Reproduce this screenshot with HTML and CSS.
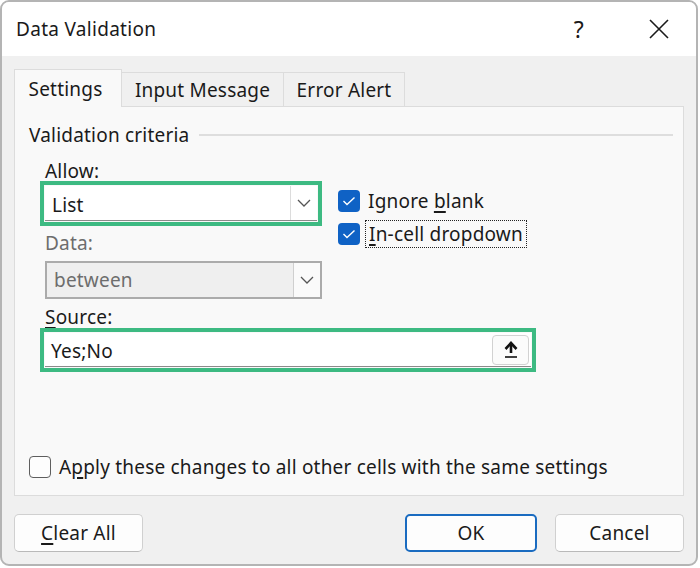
FILE: index.html
```html
<!DOCTYPE html>
<html>
<head>
<meta charset="utf-8">
<link rel="stylesheet" href="styles.css">
</head>
<body>
<div class="window">
  <div class="titlebar">
    <span class="title">Data Validation</span>
    <span class="help">?</span>
    <svg class="close" width="22" height="22" viewBox="0 0 22 22"><path d="M2 2 L20 20 M20 2 L2 20" stroke="#1a1a1a" stroke-width="1.6" fill="none"/></svg>
  </div>
  <div class="body">
    <div class="tabs">
      <div class="tab active">Settings</div>
      <div class="tab t2">Input Message</div>
      <div class="tab t3">Error Alert</div>
    </div>
    <div class="panel">
      <div class="group-title"><span>Validation criteria</span><span class="rule"></span></div>
      <div class="criteria">
        <div class="left">
          <div class="label"><u>A</u>llow:</div>
          <div class="highlight">
            <div class="select">
              <span class="value">List</span>
              <span class="drop"><svg width="14" height="8" viewBox="0 0 14 8"><path d="M1 1 L7 7 L13 1" stroke="#555" stroke-width="1.3" fill="none"/></svg></span>
            </div>
          </div>
          <div class="label disabled">Data:</div>
          <div class="select dis">
            <span class="value">between</span>
            <span class="drop"><svg width="14" height="8" viewBox="0 0 14 8"><path d="M1 1 L7 7 L13 1" stroke="#555" stroke-width="1.3" fill="none"/></svg></span>
          </div>
          <div class="label"><u>S</u>ource:</div>
          <div class="highlight wide">
            <div class="input">
              <span class="value">Yes;No</span>
              <span class="upbtn"><svg width="16" height="18" viewBox="0 0 16 18"><path d="M8 2 L8 12" stroke="#111" stroke-width="2.6" fill="none"/><path d="M2.5 8 L8 2 L13.5 8" stroke="#111" stroke-width="2.6" fill="none"/><path d="M2 16 L14 16" stroke="#111" stroke-width="1.6"/></svg></span>
            </div>
          </div>
        </div>
        <div class="right">
          <div class="check-row">
            <span class="cb on"><svg width="14" height="10" viewBox="0 0 14 10"><path d="M1.5 5 L5 8.5 L12.5 1.5" stroke="#fff" stroke-width="1.4" fill="none"/></svg></span>
            <span class="cb-label">Ignore <u>b</u>lank</span>
          </div>
          <div class="check-row">
            <span class="cb on"><svg width="14" height="10" viewBox="0 0 14 10"><path d="M1.5 5 L5 8.5 L12.5 1.5" stroke="#fff" stroke-width="1.4" fill="none"/></svg></span>
            <span class="cb-label focus"><u>I</u>n-cell dropdown</span>
          </div>
        </div>
      </div>
      <div class="apply-row">
        <span class="cb off"></span>
        <span class="cb-label">A<u>p</u>ply these changes to all other cells with the same settings</span>
      </div>
    </div>
    <div class="buttons">
      <div class="btn"><u>C</u>lear All</div>
      <div class="spacer"></div>
      <div class="btn default">OK</div>
      <div class="btn">Cancel</div>
    </div>
  </div>
</div>
</body>
</html>
```

FILE: styles.css
```css
* { box-sizing: border-box; }
html, body { margin: 0; padding: 0; background: #ffffff; }
body {
  width: 700px;
  height: 568px;
  font-family: "Noto Sans", "Open Sans", sans-serif;
  color: #1a1a1a;
  letter-spacing: 0.2px;
}
.window {
  width: 698px;
  height: 566px;
  border: 2px solid #b4b4b4;
  border-radius: 9px;
  overflow: hidden;
  display: flex;
  flex-direction: column;
  background: #f0f0f0;
}
.titlebar {
  height: 54px;
  background: #ffffff;
  display: flex;
  align-items: center;
  padding-left: 14px;
  font-size: 19px;
}
.title { flex: 1; letter-spacing: 0.3px; }
.help { font-size: 23px; margin-right: 64px; }
.close { margin-right: 26px; }
.body {
  flex: 1;
  display: flex;
  flex-direction: column;
  padding: 13px 12px 0 12px;
}
.tabs {
  display: flex;
  align-items: flex-end;
  height: 37px;
  font-size: 19px;
}
.tab {
  height: 34px;
  border: 1px solid #dcdcdc;
  border-bottom: none;
  margin-left: -1px;
  display: flex;
  align-items: center;
  justify-content: center;
  background: #f0f0f0;
}
.tab.active {
  width: 108px;
  margin-left: 0;
  padding-right: 5px;
  background: #f9f9f9;
  position: relative;
  z-index: 1;
  margin-bottom: -1px;
  height: 38px;
}
.tab.t2 { width: 163px; }
.tab.t3 { width: 122px; }
.panel {
  height: 390px;
  border: 1px solid #dcdcdc;
  background: #f9f9f9;
  display: flex;
  flex-direction: column;
  padding: 16px 10px 0 14px;
  font-size: 19px;
}
.group-title {
  display: flex;
  align-items: center;
  line-height: 24px;
}
.group-title .rule {
  flex: 1;
  height: 2px;
  background: #dedede;
  margin-left: 10px;
}
.criteria {
  display: flex;
  padding-left: 16px;
  margin-top: 13px;
}
.left { width: 293px; display: flex; flex-direction: column; }
.label { line-height: 22px; }
.label.disabled { color: #6d6d6d; margin-top: 6px; }
.highlight {
  margin-left: -5px;
  margin-top: -1px;
  width: 282px;
  border: 4px solid #3dba82;
  padding: 1px;
}
.highlight.wide { width: 496px; margin-top: 0; }
.select {
  height: 35px;
  background: #ffffff;
  display: flex;
  align-items: center;
  border-bottom: 1px solid #8a8a8a;
}
.select .value { flex: 1; padding-left: 7px; padding-top: 4px; }
.select .drop {
  width: 27px;
  height: 100%;
  border-left: 1px solid #dcdcdc;
  display: flex;
  align-items: center;
  justify-content: center;
}
.select.dis {
  margin-top: 7px;
  width: 277px;
  height: 38px;
  background: #efefef;
  border: 2px solid #ababab;
  color: #6d6d6d;
  margin-bottom: 7px;
}
.select.dis .value { padding-top: 0; }
.select.dis .drop { background: #fafafa; border-left: 1px solid #cfcfcf; }
.input {
  height: 34px;
  background: #ffffff;
  display: flex;
  align-items: center;
  border-bottom: 1px solid #8a8a8a;
}
.input .value { flex: 1; padding-left: 6px; padding-top: 2px; }
.upbtn {
  width: 37px;
  height: 30px;
  margin-right: 2px;
  border: 1px solid #d2d2d2;
  border-radius: 4px;
  background: #fbfbfb;
  display: flex;
  align-items: center;
  justify-content: center;
}
.right {
  padding-top: 28px;
  display: flex;
  flex-direction: column;
  gap: 8px;
}
.check-row {
  display: flex;
  align-items: center;
  height: 25px;
}
.cb {
  width: 22px;
  height: 22px;
  border-radius: 4px;
  display: inline-flex;
  align-items: center;
  justify-content: center;
  flex: none;
}
.cb.on { background: #0f62c5; }
.cb.off { border: 1.5px solid #5e5e5e; background: #fdfdfd; }
.cb-label { margin-left: 8px; line-height: 24px; }
.cb-label.focus {
  outline: 1.5px dotted #222;
  outline-offset: 1px;
  margin-left: 7px;
  padding: 0 2px;
}
.apply-row {
  margin-top: auto;
  margin-bottom: 16px;
  display: flex;
  align-items: center;
}
.buttons {
  display: flex;
  margin-top: 18px;
  font-size: 19px;
}
.btn {
  height: 38px;
  width: 129px;
  border: 1px solid #d0d0d0;
  border-bottom-color: #b9b9b9;
  border-radius: 5px;
  background: #fdfdfd;
  display: flex;
  align-items: center;
  justify-content: center;
}
.btn.default {
  width: 132px;
  border: 2px solid #1a6bc0;
  margin-right: 18px;
}
.spacer { flex: 1; }
u { text-decoration-thickness: 1.5px; text-underline-offset: 3px; }
```
